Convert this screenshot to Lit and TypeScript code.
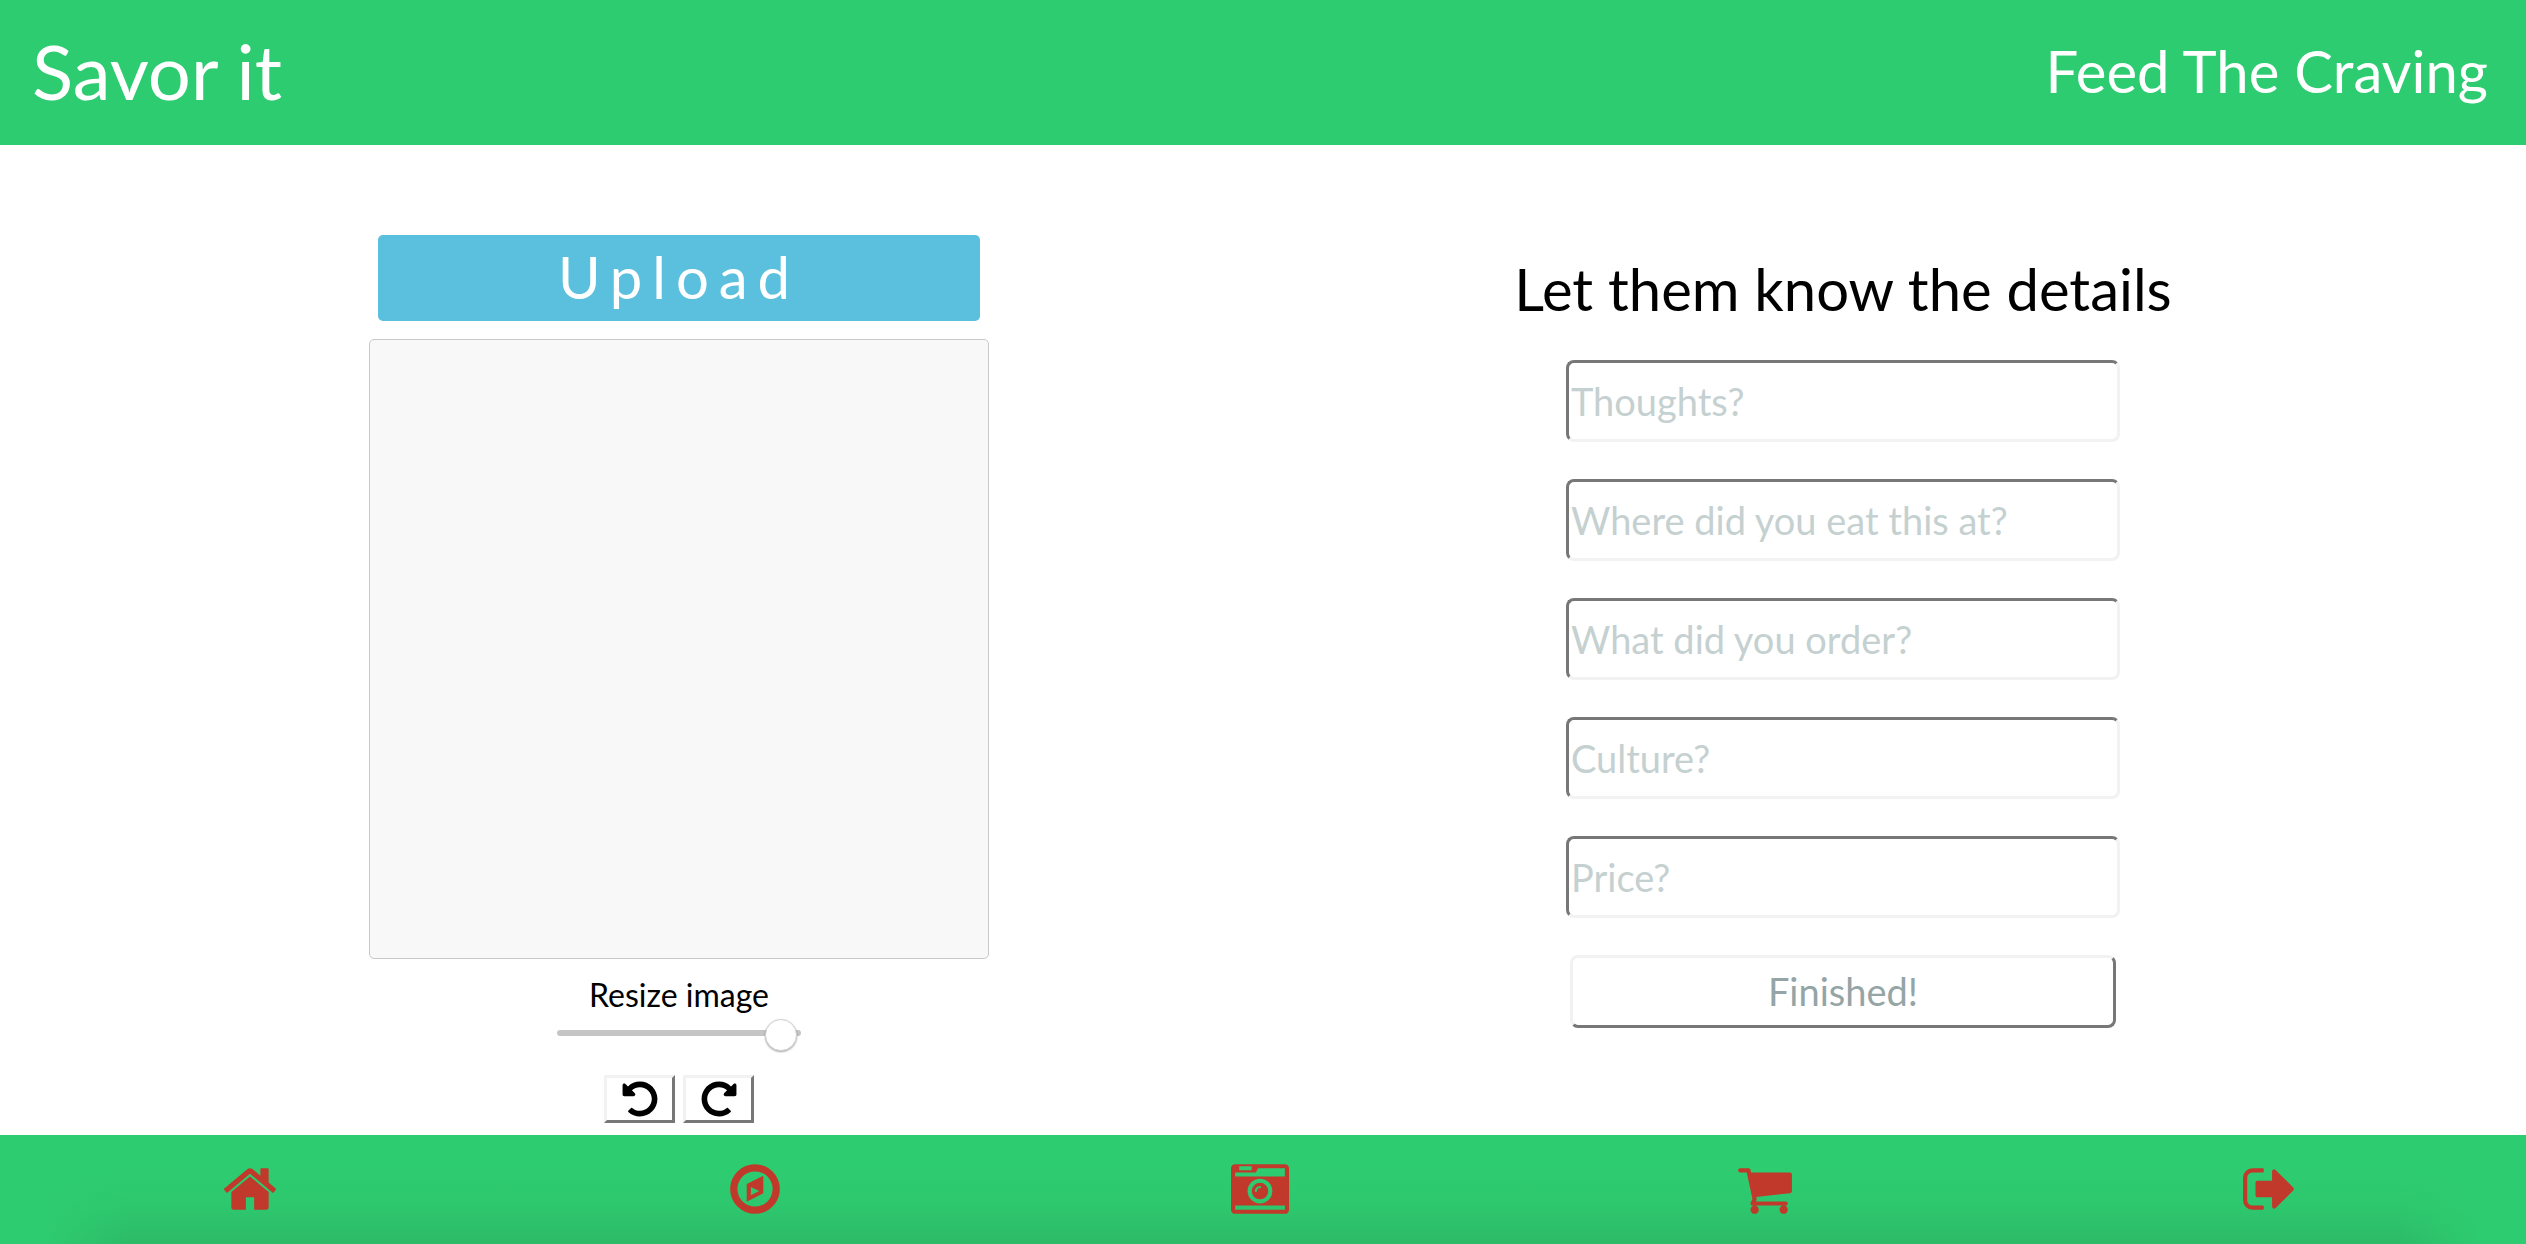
import { LitElement, html, css, svg } from "lit";
import { customElement, state } from "lit/decorators.js";

const NAV = [
  {
    label: "Home",
    href: "#home",
    path: "M1472 992v480q0 26-19 45t-45 19h-384v-384h-256v384h-384q-26 0-45-19t-19-45v-480q0-1 .5-3t.5-3l575-474 575 474q1 2 1 6zm223-69l-62 74q-8 9-21 11h-3q-13 0-21-7l-692-577-692 577q-12 8-24 7-13-2-21-11l-62-74q-8-10-7-23.5t11-21.5l719-599q32-26 76-26t76 26l244 204v-195q0-14 9-23t23-9h192q14 0 23 9t9 23v408l219 182q10 8 11 21.5t-7 23.5z",
  },
  {
    label: "Explore",
    href: "#explore",
    path: "M768 1088l256-128-256-128v256zM1152 489v542l-512 256v-542zM896 352a544 544 0 1 0 0 1088a544 544 0 1 0 0-1088zM896 128a768 768 0 1 1 0 1536a768 768 0 1 1 0-1536z",
  },
  {
    label: "Photo",
    href: "#photo",
    path: "M128 128h1536a128 128 0 0 1 128 128v1280a128 128 0 0 1-128 128h-1536a128 128 0 0 1-128-128v-1280a128 128 0 0 1 128-128zM256 192v128h384v-128zM832 256l-64 128h-640v128h1536v-256zM128 1408v128h1536v-128zM896 576a384 384 0 1 0 0 768a384 384 0 1 0 0-768zM896 704a256 256 0 1 1 0 512a256 256 0 1 1 0-512zM928 832q0-14-9-23t-23-9q-66 0-113 47t-47 113q0 14 9 23t23 9 23-9 9-23q0-40 28-68t68-28q14 0 23-9t9-23z",
  },
  {
    label: "Cart",
    href: "#cart",
    path: "M704 1536q0 52-38 90t-90 38-90-38-38-90 38-90 90-38 90 38 38 90zm896 0q0 52-38 90t-90 38-90-38-38-90 38-90 90-38 90 38 38 90zm128-1088v512q0 24-16.5 42.5t-40.5 21.5l-1044 122q13 60 13 70 0 16-24 64h920q26 0 45 19t19 45-19 45-45 19h-1024q-26 0-45-19t-19-45q0-11 8-31.5t16-36 21.5-40 15.5-29.5l-177-823h-204q-26 0-45-19t-19-45 19-45 45-19h256q16 0 28.5 6.5t19.5 15.5 13 24.5 8 26 5.5 29.5 4.5 26h1201q26 0 45 19t19 45z",
  },
  {
    label: "Sign out",
    href: "#sign-out",
    path: "M704 1440q0 4 1 20t.5 26.5-3 23.5-10 19.5-20.5 6.5h-320q-119 0-203.5-84.5t-84.5-203.5v-704q0-119 84.5-203.5t203.5-84.5h320q13 0 22.5 9.5t9.5 22.5q0 4 1 20t.5 26.5-3 23.5-10 19.5-20.5 6.5h-320q-66 0-113 47t-47 113v704q0 66 47 113t113 47h312l11.5 1 11.5 3 8 5.5 7 9 2 13.5zm928-544q0 26-19 45l-544 544q-19 19-45 19t-45-19-19-45v-288h-448q-26 0-45-19t-19-45v-384q0-26 19-45t45-19h448v-288q0-26 19-45t45-19 45 19l544 544q19 19 19 45z",
  },
];

const FIELDS = [
  { id: "thoughts", hint: "Thoughts?" },
  { id: "place", hint: "Where did you eat this at?" },
  { id: "order", hint: "What did you order?" },
  { id: "culture", hint: "Culture?" },
  { id: "price", hint: "Price?" },
];

const TURN = svg`<path d="M255.545 8c-66.269.119-126.438 26.233-170.86 68.685L48.971 40.971C33.851 25.851 8 36.559 8 57.941V192c0 13.255 10.745 24 24 24h134.059c21.382 0 32.09-25.851 16.971-40.971l-41.75-41.75c30.864-28.899 70.801-44.907 113.23-45.273 92.398-.798 170.283 73.977 169.484 169.442C423.236 348.009 349.816 424 256 424c-41.127 0-79.997-14.678-110.63-41.556-4.743-4.161-11.906-3.908-16.368.553L89.34 422.659c-4.872 4.872-4.631 12.815.482 17.433C133.798 479.813 192.074 504 256 504c136.966 0 247.999-111.033 248-247.998C504.001 119.193 392.354 7.755 255.545 8z"/>`;

@customElement("photo-editor")
export class PhotoEditor extends LitElement {
  @state() private zoom = 98;

  static styles = css`
    :host {
      display: flex;
      flex-direction: column;
      align-items: center;
    }
    .upload {
      width: 602px;
      max-width: 100%;
      height: 86px;
      padding: 0 0 2px;
      border: 0;
      border-radius: 5px;
      background: #5bc0de;
      color: #fff;
      font: 400 58px/72px Lato, sans-serif;
      letter-spacing: 10px;
    }
    .preview {
      box-sizing: border-box;
      width: 620px;
      max-width: 100%;
      aspect-ratio: 1;
      margin-top: 18px;
      border: 1px solid #c8c8c8;
      border-radius: 5px;
      background: #f8f8f8;
    }
    .label {
      margin-top: 18px;
      color: #000;
      font-size: 32px;
      line-height: 36px;
    }
    .zoom {
      appearance: none;
      width: 244px;
      height: 6px;
      margin: 17px 0 0;
      border-radius: 3px;
      background: #c5c5c5;
    }
    .zoom::-webkit-slider-thumb {
      appearance: none;
      width: 32px;
      height: 32px;
      margin-top: 4px;
      border: 1px solid #d2d2d2;
      border-radius: 50%;
      box-sizing: border-box;
      background: #fff;
      box-shadow: 0 1px 2px rgba(0, 0, 0, 0.35);
    }
    .turns {
      display: flex;
      gap: 8px;
      margin: 39px 0 12px;
    }
    .turn {
      display: flex;
      align-items: center;
      justify-content: center;
      width: 71px;
      height: 48px;
      padding: 0;
      border: 3px solid;
      border-color: #f2f2f2 #777 #777 #f2f2f2;
      background: #fff;
    }
    .turn-icon {
      width: 36px;
      height: 36px;
      fill: #000;
    }
    .mirrored {
      transform: scaleX(-1);
    }
  `;

  render() {
    return html`
      <button class="upload" type="button">Upload</button>
      <div class="preview"></div>
      <label class="label" for="zoom">Resize image</label>
      <input
        class="zoom"
        id="zoom"
        type="range"
        min="0"
        max="100"
        .value=${String(this.zoom)}
        @input=${(e: Event) => (this.zoom = Number((e.target as HTMLInputElement).value))}
      />
      <div class="turns">
        <button class="turn" type="button" aria-label="Rotate left">
          <svg class="turn-icon" viewBox="0 0 512 512" aria-hidden="true">${TURN}</svg>
        </button>
        <button class="turn" type="button" aria-label="Rotate right">
          <svg class="turn-icon mirrored" viewBox="0 0 512 512" aria-hidden="true">${TURN}</svg>
        </button>
      </div>
    `;
  }
}

@customElement("details-form")
export class DetailsForm extends LitElement {
  static styles = css`
    .form {
      display: flex;
      flex-direction: column;
      align-items: center;
      gap: 37px;
      padding-top: 20px;
    }
    .title {
      margin: 0;
      color: #000;
      font-size: 58px;
      font-weight: 400;
      line-height: 68px;
      white-space: nowrap;
    }
    .field {
      box-sizing: border-box;
      width: 554px;
      max-width: 100%;
      height: 82px;
      padding: 0 2px;
      border: 3px solid;
      border-color: #777 #f2f2f2 #f2f2f2 #777;
      border-radius: 8px;
      background: #fff;
      color: #95a5a6;
      font: 400 38px/48px Lato, sans-serif;
    }
    .field::placeholder {
      color: #c5d0d0;
    }
    .submit {
      width: 546px;
      max-width: 100%;
      height: 73px;
      padding: 0 0 2px;
      border: 3px solid;
      border-color: #f2f2f2 #777 #777 #f2f2f2;
      border-radius: 8px;
      background: #fff;
      color: #95a5a6;
      font: 400 38px/48px Lato, sans-serif;
    }
  `;

  render() {
    return html`
      <form class="form" @submit=${(e: Event) => e.preventDefault()}>
        <h2 class="title">Let them know the details</h2>
        ${FIELDS.map(
          (f) => html`<input class="field" id=${f.id} name=${f.id} type="text" placeholder=${f.hint} aria-label=${f.hint} />`
        )}
        <button class="submit" type="submit">Finished!</button>
      </form>
    `;
  }
}

@customElement("app-root")
export class AppRoot extends LitElement {
  static styles = css`
    :host {
      display: flex;
      flex-direction: column;
      min-height: 100vh;
      background: #fff;
      font-family: Lato, sans-serif;
    }
    .header {
      box-sizing: border-box;
      display: flex;
      align-items: center;
      justify-content: space-between;
      height: 145px;
      padding: 0 38px 4px 32px;
      background: #2ecc71;
      color: #fff;
    }
    .brand {
      margin: 0;
      font-size: 76px;
      font-weight: 400;
      line-height: 90px;
    }
    .slogan {
      margin: 0;
      font-size: 58px;
      line-height: 72px;
    }
    .main {
      flex: 1;
      display: grid;
      grid-template-columns: 1fr 1fr;
      padding: 90px 101px 0 97px;
    }
    .nav {
      display: grid;
      grid-template-columns: repeat(5, 1fr);
      height: 109px;
      background:
        linear-gradient(to right, #2ecc71 40px, transparent 130px),
        linear-gradient(to left, #2ecc71 40px, transparent 130px),
        linear-gradient(#2ecc71 30%, #2dc76e 65%, #2dba67);
    }
    .link {
      display: flex;
      align-items: center;
      justify-content: center;
      padding: 0 6px 2px 0;
    }
    .icon {
      width: 58px;
      height: 58px;
      fill: #c0392b;
      fill-rule: evenodd;
    }
  `;

  render() {
    return html`
      <header class="header">
        <h1 class="brand">Savor it</h1>
        <p class="slogan">Feed The Craving</p>
      </header>
      <main class="main">
        <photo-editor></photo-editor>
        <details-form></details-form>
      </main>
      <nav class="nav">
        ${NAV.map(
          (n) => html`<a class="link" href=${n.href} aria-label=${n.label}>
            <svg class="icon" viewBox="0 0 1792 1792" aria-hidden="true"><path d=${n.path} /></svg>
          </a>`
        )}
      </nav>
    `;
  }
}
